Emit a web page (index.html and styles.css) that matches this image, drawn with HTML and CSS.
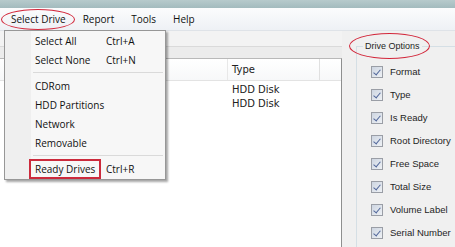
FILE: index.html
```html
<!DOCTYPE html>
<html lang="en">
<head>
    <meta charset="UTF-8">
    <title>Drive Info</title>
    <link rel="stylesheet" href="styles.css">
</head>
<body>
    <div class="window">
        <div class="titlebar"></div>

        <!-- Menu bar -->
        <div class="menubar">
            <span class="menu-item">Select Drive</span>
            <span class="menu-item">Report</span>
            <span class="menu-item">Tools</span>
            <span class="menu-item">Help</span>
        </div>

        <div class="content">
            <!-- Drive list -->
            <div class="main">
                <div class="toolbar"></div>
                <div class="strip"></div>
                <div class="grid">
                    <div class="grid-head">
                        <div class="col col-name"></div>
                        <div class="col col-type">Type</div>
                        <div class="col col-rest"></div>
                    </div>
                    <div class="grid-row">
                        <div class="col col-name"></div>
                        <div class="col col-type">HDD Disk</div>
                    </div>
                    <div class="grid-row">
                        <div class="col col-name"></div>
                        <div class="col col-type">HDD Disk</div>
                    </div>
                </div>
            </div>

            <!-- Options panel -->
            <div class="side">
                <div class="groupbox">
                    <div class="group-title">Drive Options</div>
                    <label class="opt"><span class="cb"></span>Format</label>
                    <label class="opt"><span class="cb"></span>Type</label>
                    <label class="opt"><span class="cb"></span>Is Ready</label>
                    <label class="opt"><span class="cb"></span>Root Directory</label>
                    <label class="opt"><span class="cb"></span>Free Space</label>
                    <label class="opt"><span class="cb"></span>Total Size</label>
                    <label class="opt"><span class="cb"></span>Volume Label</label>
                    <label class="opt"><span class="cb"></span>Serial Number</label>
                </div>
            </div>
        </div>

        <!-- Open dropdown -->
        <div class="dropdown">
            <div class="dd-item"><span class="dd-text">Select All</span><span class="dd-key">Ctrl+A</span></div>
            <div class="dd-item"><span class="dd-text">Select None</span><span class="dd-key">Ctrl+N</span></div>
            <div class="dd-sep"></div>
            <div class="dd-item"><span class="dd-text">CDRom</span></div>
            <div class="dd-item"><span class="dd-text">HDD Partitions</span></div>
            <div class="dd-item"><span class="dd-text">Network</span></div>
            <div class="dd-item"><span class="dd-text">Removable</span></div>
            <div class="dd-sep"></div>
            <div class="dd-item"><span class="dd-text marked">Ready Drives</span><span class="dd-key">Ctrl+R</span></div>
        </div>

        <!-- Annotation marks -->
        <div class="ring ring-menu"></div>
        <div class="ring ring-group"></div>
    </div>
</body>
</html>
```

FILE: styles.css
```css
* {
    margin: 0;
    padding: 0;
    box-sizing: border-box;
}

body {
    font-family: "Open Sans", "Liberation Sans", sans-serif;
    font-size: 10px;
    color: #111;
    background: #f0f0f0;
    overflow: hidden;
}

.window {
    position: relative;
    width: 455px;
    height: 247px;
    overflow: hidden;
    background: #f0f0f0;
}

.titlebar {
    height: 8px;
    background: linear-gradient(#b7cacc, #a3bbbe);
}

.menubar {
    height: 23px;
    display: flex;
    align-items: center;
    padding-left: 2px;
    background: linear-gradient(#fbfcfd, #eef1f5);
    border-bottom: 1px solid #dfe3e8;
}

.menu-item {
    padding: 0 8px 0 9px;
}

.content {
    display: flex;
    height: 216px;
}

.main {
    width: 342px;
    display: flex;
    flex-direction: column;
}

.toolbar {
    height: 16px;
    background: #f3f3f3;
    border-bottom: 1px solid #dadada;
}

.strip {
    height: 11px;
    background: #ececec;
}

.grid {
    flex: 1;
    background: #fff;
    border-top: 1px solid #b9b9b9;
    border-right: 1px solid #8e8f8f;
    font-family: "DejaVu Sans", sans-serif;
    font-size: 10px;
    color: #222;
}

.grid-head {
    display: flex;
    height: 22px;
    align-items: center;
    border-bottom: 1px solid #e3e3e3;
    background: linear-gradient(#ffffff, #f7f8f9);
    margin-bottom: 1px;
}

.grid-row {
    display: flex;
    height: 14px;
    align-items: center;
}

.col {
    height: 100%;
    display: flex;
    align-items: center;
    padding-left: 4px;
}

.col-name {
    width: 227px;
}

.col-type {
    width: 93px;
}

.grid-head .col-type {
    border-right: 1px solid #e0e0e0;
    border-left: 1px solid #e8e8e8;
}

.grid-row .col-type {
    padding-left: 5px;
}

.col-rest {
    flex: 1;
}

.side {
    flex: 1;
    padding: 15px 0 0 14px;
}

.groupbox {
    height: 210px;
    border: 1px solid #d5dfe5;
    border-right: none;
    font-family: "Liberation Sans", sans-serif;
    font-size: 9.5px;
    color: #1e1e1e;
    padding-left: 14px;
}

.group-title {
    margin: -6px 0 8px -8px;
    padding: 0 2px;
    background: #f0f0f0;
    width: max-content;
    line-height: 11px;
    font-size: 9px;
}

.opt {
    display: flex;
    align-items: center;
    height: 23px;
}

.cb {
    width: 12px;
    height: 12px;
    margin-right: 7px;
    border: 1px solid #9a9ea6;
    background: linear-gradient(135deg, #cdd5e1, #eef1f5);
    position: relative;
}

.cb::after {
    content: "";
    position: absolute;
    left: 3px;
    top: 1px;
    width: 3px;
    height: 6px;
    border: solid #51679a;
    border-width: 0 1.5px 1.5px 0;
    transform: rotate(40deg);
}

/* dropdown over the window */
.dropdown {
    position: absolute;
    left: 4px;
    top: 30px;
    width: 162px;
    height: 150px;
    background: linear-gradient(90deg, #efefef 26px, #f7f7f7 26px);
    border: 1px solid #979797;
    box-shadow: 2px 2px 2px rgba(0, 0, 0, 0.35);
}

.dd-item {
    height: 19px;
    display: flex;
    align-items: center;
    padding-left: 30px;
}

.dd-text {
    width: 71px;
}

.dd-text.marked {
    margin-left: -6px;
    padding: 1px 0 1px 4px;
    width: 72px;
    border: 2px solid #cc2a3c;
    margin-right: 5px;
}

.dd-sep {
    height: 7px;
    margin-left: 28px;
    margin-right: 2px;
    border-top: 1px solid #dadada;
    position: relative;
    top: 3px;
}

.ring {
    position: absolute;
    border: 1.5px solid #d2263a;
    border-radius: 50%;
}

.ring-menu {
    left: 1px;
    top: 9px;
    width: 74px;
    height: 21px;
}

.ring-group {
    left: 349px;
    top: 33px;
    width: 81px;
    height: 26px;
}
```
